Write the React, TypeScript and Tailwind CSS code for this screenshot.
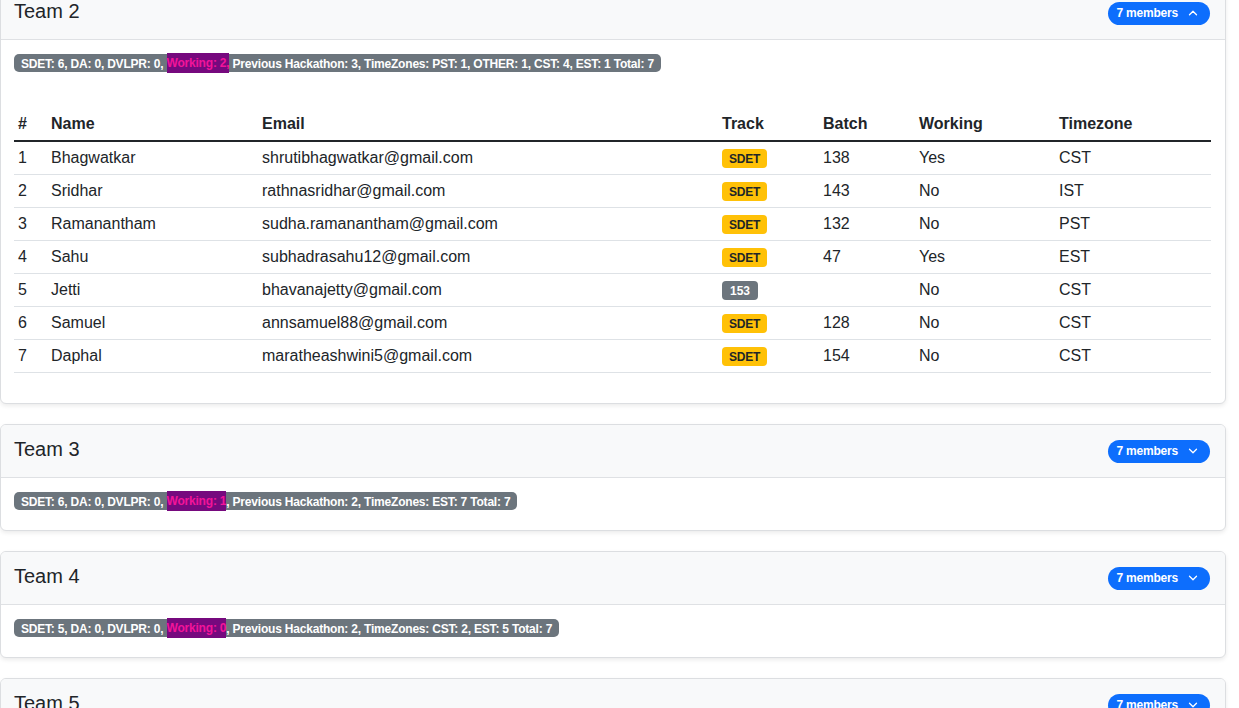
import { ChevronDown, ChevronUp } from "lucide-react";

type Member = {
  name: string;
  email: string;
  track: string;
  batch: string;
  working: string;
  tz: string;
};

const team2: Member[] = [
  { name: "Bhagwatkar", email: "shrutibhagwatkar@gmail.com", track: "SDET", batch: "138", working: "Yes", tz: "CST" },
  { name: "Sridhar", email: "rathnasridhar@gmail.com", track: "SDET", batch: "143", working: "No", tz: "IST" },
  { name: "Ramanantham", email: "sudha.ramanantham@gmail.com", track: "SDET", batch: "132", working: "No", tz: "PST" },
  { name: "Sahu", email: "subhadrasahu12@gmail.com", track: "SDET", batch: "47", working: "Yes", tz: "EST" },
  { name: "Jetti", email: "bhavanajetty@gmail.com", track: "153", batch: "", working: "No", tz: "CST" },
  { name: "Samuel", email: "annsamuel88@gmail.com", track: "SDET", batch: "128", working: "No", tz: "CST" },
  { name: "Daphal", email: "maratheashwini5@gmail.com", track: "SDET", batch: "154", working: "No", tz: "CST" },
];

function Stats({ before, working, after }: { before: string; working: string; after: string }) {
  return (
    <div className="flex">
      <span className="block h-[18px] whitespace-pre rounded-[5px] bg-[#6c757d] px-[7px] text-[12px] font-bold leading-[18px] tracking-[-0.2px] text-white">
        {before}
        <span className="inline-block h-[20px] -translate-y-[1px] bg-[#76097e] leading-[20px] text-[#f2149a]">{working}</span>
        {after}
      </span>
    </div>
  );
}

function Header({ title, open }: { title: string; open?: boolean }) {
  return (
    <div className="flex h-[53px] items-center justify-between border-b border-[#dfe1e4] bg-[#f8f9fa] pl-[13px] pr-[14px]">
      <h5 className="pb-[5px] text-[20px] font-medium leading-[24px] text-[#212529]">{title}</h5>
      <span className="mr-[1px] flex h-[23px] items-center gap-[8px] rounded-full bg-[#0d6efd] pl-[8px] pr-[10px] text-[12px] font-bold tracking-[-0.2px] text-white">
        7 members
        {open ? <ChevronUp size={14} strokeWidth={2.2} /> : <ChevronDown size={14} strokeWidth={2.2} />}
      </span>
    </div>
  );
}

function Card({ children }: { children: React.ReactNode }) {
  return (
    <div className="mr-[13px] overflow-hidden rounded-[6px] border border-[#dcdee1] bg-white shadow-[0_2px_4px_rgba(0,0,0,0.08)]">
      {children}
    </div>
  );
}

function TrackBadge({ track }: { track: string }) {
  if (track === "SDET") {
    return (
      <span className="inline-flex h-[19px] items-center rounded-[4px] bg-[#ffc107] px-[7px] align-middle text-[12px] font-bold tracking-[-0.2px] text-[#212529]">
        SDET
      </span>
    );
  }
  return (
    <span className="inline-flex h-[19px] items-center rounded-[4px] bg-[#6c757d] px-[8px] align-middle text-[12px] font-bold text-white">
      {track}
    </span>
  );
}

export default function App() {
  return (
    <div className="-mt-[14px] flex flex-col gap-[20px] bg-white font-['Liberation_Sans',Arial,sans-serif] text-[#212529]">
      <Card>
        <Header title="Team 2" open />
        <div className="pb-[30px] pl-[13px] pr-[14px] pt-[14px]">
          <Stats
            before="SDET: 6, DA: 0, DVLPR: 0, "
            working="Working: 2,"
            after=" Previous Hackathon: 3, TimeZones: PST: 1, OTHER: 1, CST: 4, EST: 1 Total: 7"
          />
          <table className="mt-[36px] w-full table-fixed border-collapse text-[16px] leading-6">
            <colgroup>
              <col className="w-[33px]" />
              <col className="w-[211px]" />
              <col className="w-[460px]" />
              <col className="w-[101px]" />
              <col className="w-[96px]" />
              <col className="w-[140px]" />
              <col />
            </colgroup>
            <thead>
              <tr className="border-b-2 border-[#212529] text-left font-bold">
                <th className="px-[4px] py-[4px]">#</th>
                <th className="px-[4px] py-[4px]">Name</th>
                <th className="px-[4px] py-[4px]">Email</th>
                <th className="px-[4px] py-[4px]">Track</th>
                <th className="px-[4px] py-[4px]">Batch</th>
                <th className="px-[4px] py-[4px]">Working</th>
                <th className="px-[4px] py-[4px]">Timezone</th>
              </tr>
            </thead>
            <tbody>
              {team2.map((m, i) => (
                <tr key={m.email} className="border-b border-[#dee2e6]">
                  <td className="px-[4px] py-[4px]">{i + 1}</td>
                  <td className="px-[4px] py-[4px]">{m.name}</td>
                  <td className="px-[4px] py-[4px]">{m.email}</td>
                  <td className="px-[4px] py-[4px]">
                    <TrackBadge track={m.track} />
                  </td>
                  <td className="px-[4px] py-[4px]">{m.batch}</td>
                  <td className="px-[4px] py-[4px]">{m.working}</td>
                  <td className="px-[4px] py-[4px]">{m.tz}</td>
                </tr>
              ))}
            </tbody>
          </table>
        </div>
      </Card>

      <Card>
        <Header title="Team 3" />
        <div className="pb-[20px] pl-[13px] pr-[14px] pt-[14px]">
          <Stats
            before="SDET: 6, DA: 0, DVLPR: 0, "
            working="Working: 1"
            after=", Previous Hackathon: 2, TimeZones: EST: 7 Total: 7"
          />
        </div>
      </Card>

      <Card>
        <Header title="Team 4" />
        <div className="pb-[20px] pl-[13px] pr-[14px] pt-[14px]">
          <Stats
            before="SDET: 5, DA: 0, DVLPR: 0, "
            working="Working: 0"
            after=", Previous Hackathon: 2, TimeZones: CST: 2, EST: 5 Total: 7"
          />
        </div>
      </Card>

      <Card>
        <Header title="Team 5" />
        <div className="h-[60px]" />
      </Card>
    </div>
  );
}
